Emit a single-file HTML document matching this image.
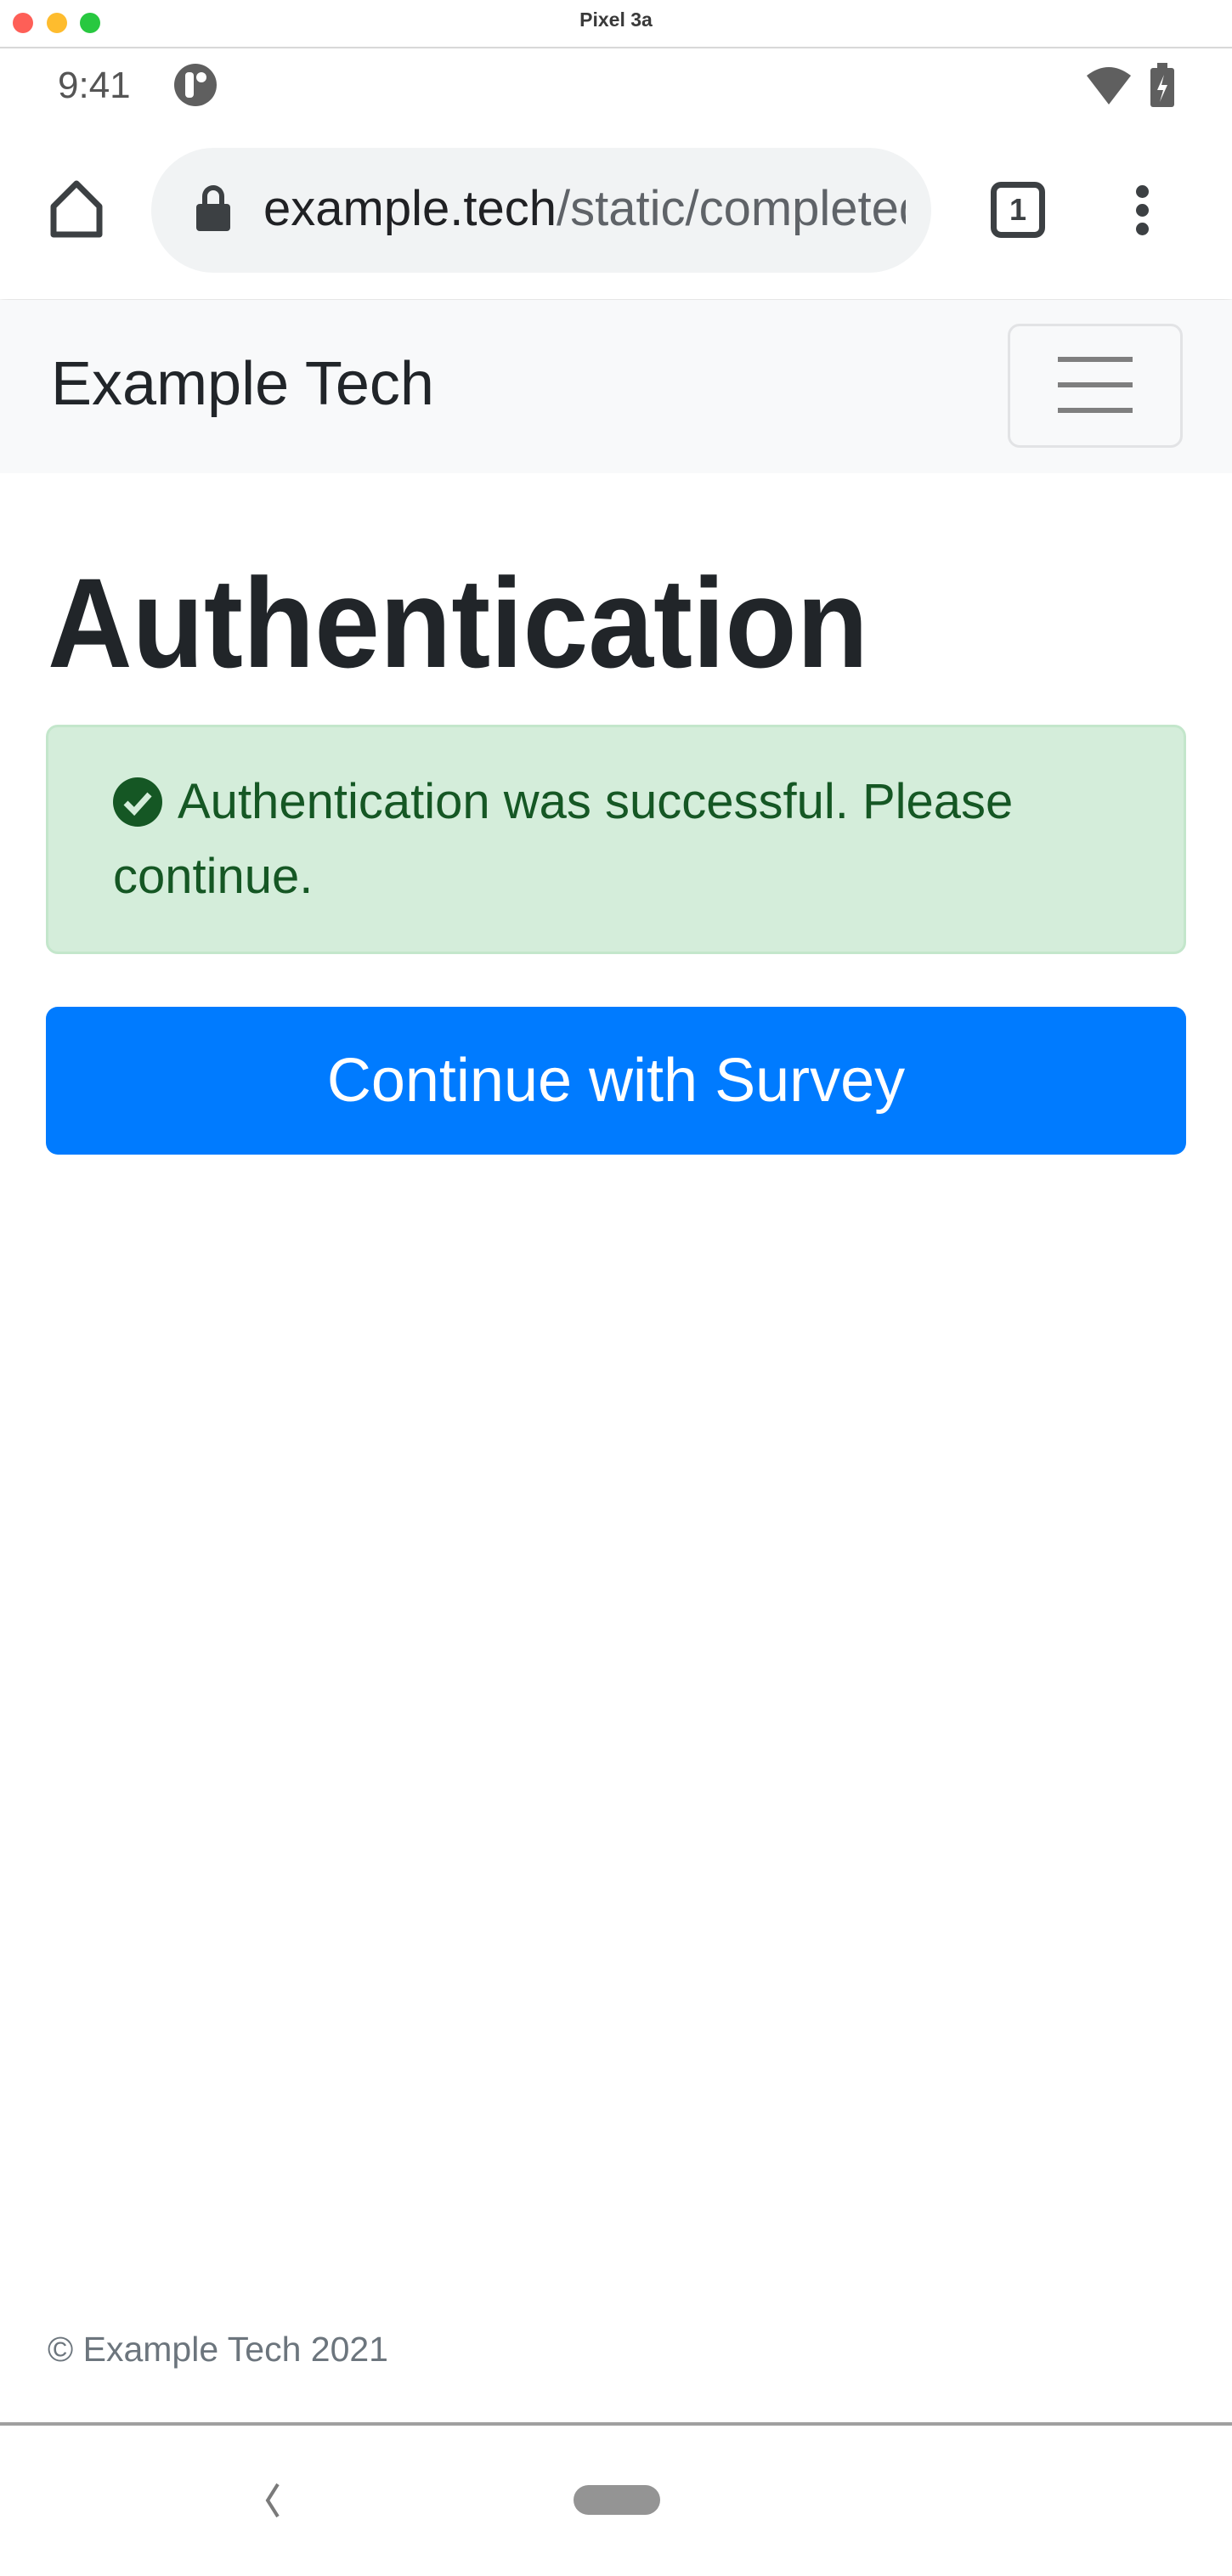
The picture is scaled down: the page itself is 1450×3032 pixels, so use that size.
<!DOCTYPE html>
<html><head><meta charset="utf-8">
<style>
*{box-sizing:border-box;margin:0;padding:0}
body{width:1450px;height:3032px;position:relative;background:#fff;font-family:"Liberation Sans",sans-serif;overflow:hidden}
.abs{position:absolute}
</style></head><body>
<!-- toolbar bg -->
<div class="abs" style="left:0;top:58px;width:1450px;height:294px;background:#fff;box-shadow:0 4px 8px rgba(0,0,0,.12)"></div>
<!-- mac title bar -->
<div class="abs" style="left:0;top:0;width:1450px;height:57px;background:#fff;border-bottom:2px solid #d8d8d8"></div>
<div class="abs" style="left:15px;top:15px;width:24px;height:24px;border-radius:50%;background:#fe5f57"></div>
<div class="abs" style="left:55px;top:15px;width:24px;height:24px;border-radius:50%;background:#febc2e"></div>
<div class="abs" style="left:94px;top:15px;width:24px;height:24px;border-radius:50%;background:#28c840"></div>
<div class="abs" style="left:0;top:10px;width:1450px;text-align:center;font-size:23px;font-weight:bold;color:#3a3a3a">Pixel 3a</div>
<!-- status bar -->
<div class="abs" style="left:68px;top:76px;font-size:44px;color:#555">9:41</div>
<div class="abs" style="left:205px;top:75px;width:50px;height:50px;border-radius:50%;background:#5f5f5f"></div>
<div class="abs" style="left:218px;top:85px;width:10px;height:30px;background:#fff;border-radius:4px"></div>
<div class="abs" style="left:231px;top:85px;width:12px;height:12px;background:#fff;border-radius:50%"></div>
<svg class="abs" style="left:1275px;top:75px" width="60" height="50" viewBox="0 0 60 50"><path d="M4 14 Q30 -6 56 14 L30 48 Z" fill="#5f5f5f"/></svg>
<div class="abs" style="left:1354px;top:80px;width:28px;height:46px;background:#5f5f5f;border-radius:3px"></div>
<div class="abs" style="left:1362px;top:74px;width:12px;height:8px;background:#5f5f5f"></div>
<svg class="abs" style="left:1354px;top:82px" width="28" height="44"><path d="M16 6 L8 24 L15 24 L11 38 L20 18 L13 18 Z" fill="#fff"/></svg>
<!-- toolbar -->
<svg class="abs" style="left:55px;top:210px" width="70" height="72" viewBox="0 0 70 72"><path d="M35 6 L8 33 L8 66 L62 66 L62 33 Z" fill="none" stroke="#3c4043" stroke-width="7" stroke-linejoin="round"/></svg>
<div class="abs" style="left:178px;top:174px;width:918px;height:147px;border-radius:74px;background:#f1f3f4"></div>
<div class="abs" style="left:231px;top:240px;width:40px;height:32px;background:#3c4043;border-radius:4px"></div>
<div class="abs" style="left:238px;top:218px;width:26px;height:30px;border:6px solid #3c4043;border-bottom:none;border-radius:13px 13px 0 0"></div>
<div class="abs" style="left:310px;top:212px;width:756px;overflow:hidden;white-space:nowrap;font-size:58px;color:#202124">example.tech<span style="color:#5f6368">/static/completed</span></div>
<div class="abs" style="left:1166px;top:214px;width:64px;height:66px;border:7px solid #3c4043;border-radius:12px;text-align:center;font-size:36px;font-weight:bold;line-height:52px;color:#3c4043">1</div>
<div class="abs" style="left:1337px;top:218px;width:15px;height:15px;border-radius:50%;background:#3c4043"></div>
<div class="abs" style="left:1337px;top:240px;width:15px;height:15px;border-radius:50%;background:#3c4043"></div>
<div class="abs" style="left:1337px;top:262px;width:15px;height:15px;border-radius:50%;background:#3c4043"></div>
<!-- navbar -->
<div class="abs" style="left:0;top:353px;width:1450px;height:204px;background:#f8f9fa"></div>
<div class="abs" style="left:60px;top:408px;font-size:72px;color:#212529;line-height:88px">Example Tech</div>
<div class="abs" style="left:1186px;top:381px;width:206px;height:146px;border:3px solid #e2e3e5;border-radius:14px"></div>
<div class="abs" style="left:1245px;top:420px;width:88px;height:6px;background:#7f7f7f"></div>
<div class="abs" style="left:1245px;top:450px;width:88px;height:6px;background:#7f7f7f"></div>
<div class="abs" style="left:1245px;top:480px;width:88px;height:6px;background:#7f7f7f"></div>
<!-- h1 -->
<div class="abs" style="left:56px;top:648px;font-size:150px;font-weight:bold;color:#212529;line-height:170px;transform:scaleX(0.92);transform-origin:left">Authentication</div>
<!-- alert -->
<div class="abs" style="left:54px;top:853px;width:1342px;height:270px;background:#d4edda;border:3px solid #c3e6cb;border-radius:14px"></div>
<svg class="abs" style="left:133px;top:915px" width="58" height="58" viewBox="0 0 58 58"><circle cx="29" cy="29" r="29" fill="#155724"/><path d="M15 30 L25 40 L43 20" fill="none" stroke="#d4edda" stroke-width="7"/></svg>
<div class="abs" style="left:133px;top:900px;width:1200px;font-size:58px;line-height:88px;color:#155724"><span style="display:inline-block;width:76px"></span>Authentication was successful. Please continue.</div>
<!-- button -->
<div class="abs" style="left:54px;top:1185px;width:1342px;height:174px;background:#007bff;border-radius:14px;color:#fff;font-size:72px;text-align:center;line-height:174px">Continue with Survey</div>
<!-- footer -->
<div class="abs" style="left:56px;top:2742px;font-size:41px;color:#6c757d">© Example Tech 2021</div>
<div class="abs" style="left:0;top:2851px;width:1450px;height:4px;background:#a0a0a0"></div>
<svg class="abs" style="left:305px;top:2920px" width="30" height="46"><path d="M22 4 L10 23 L22 42" fill="none" stroke="#7a7a7a" stroke-width="4"/></svg>
<div class="abs" style="left:675px;top:2925px;width:102px;height:35px;border-radius:18px;background:#949494"></div>
</body></html>
